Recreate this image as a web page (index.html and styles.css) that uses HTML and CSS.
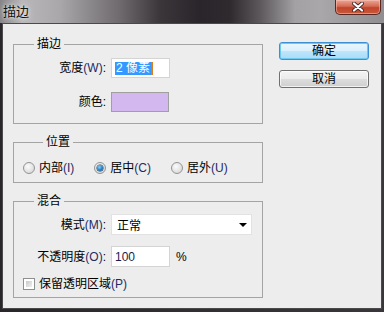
FILE: index.html
```html
<!DOCTYPE html>
<html>
<head>
<meta charset="utf-8">
<link rel="stylesheet" href="styles.css">
</head>
<body>
<div class="titlebar">
  <span class="title">描边</span>
  <div class="close">
    <svg width="14" height="10" viewBox="0 0 14 10">
      <path d="M3 1.5 L11 8.5 M11 1.5 L3 8.5" stroke="#4a2a2a" stroke-width="4" stroke-linecap="round"/>
      <path d="M3 1.5 L11 8.5 M11 1.5 L3 8.5" stroke="#ffffff" stroke-width="2.2" stroke-linecap="round"/>
    </svg>
  </div>
</div>
<div class="main">
  <div class="client">
    <div class="left">
      <fieldset class="group g1">
        <legend>描边</legend>
        <div class="form">
          <span class="lbl">宽度<span class="mn">(W)</span>:</span>
          <div class="input w-input"><span class="sel">2 像素</span><span class="caret"></span></div>
          <span class="lbl">颜色:</span>
          <div class="swatch"></div>
        </div>
      </fieldset>
      <fieldset class="group g2">
        <legend>位置</legend>
        <div class="radios">
          <label class="opt"><span class="radio"></span><span>内部<span class="mn">(I)</span></span></label>
          <label class="opt"><span class="radio on"></span><span>居中<span class="mn">(C)</span></span></label>
          <label class="opt"><span class="radio"></span><span>居外<span class="mn">(U)</span></span></label>
        </div>
      </fieldset>
      <fieldset class="group g3">
        <legend>混合</legend>
        <div class="form f3">
          <span class="lbl">模式<span class="mn">(M)</span>:</span>
          <div class="select"><span>正常</span><span class="arrow"></span></div>
          <span class="lbl">不透明度<span class="mn">(O)</span>:</span>
          <div class="opac"><div class="input o-input">100</div><span class="pct">%</span></div>
        </div>
        <label class="check"><span class="box"></span><span>保留透明区域<span class="mn">(P)</span></span></label>
      </fieldset>
    </div>
    <div class="right">
      <div class="btn default">确定</div>
      <div class="btn">取消</div>
    </div>
  </div>
</div>
</body>
</html>
```
FILE: styles.css
```css
html, body {
  margin: 0;
  padding: 0;
}
body {
  width: 384px;
  height: 312px;
  overflow: hidden;
  font-family: "Liberation Sans", "Noto Sans CJK SC", sans-serif;
  font-size: 12px;
  color: #000;
  display: flex;
  flex-direction: column;
  background: #2f2c31;
}
.titlebar {
  height: 23px;
  display: flex;
  justify-content: space-between;
  align-items: flex-start;
  background: linear-gradient(90deg, #858385 0, #b9b7b9 22px, #a9a7a9 60px, #6e6a6e 120px, #3a363a 160px, #29252a 200px, #2e2a2e 230px, #5c585c 260px, #a3a1a3 295px, #a9a7a9 320px, #908e90 384px);
}
.title {
  padding: 4px 0 0 3px;
  line-height: 16px;
  font-size: 13px;
  color: #111;
  text-shadow: 0 0 6px #e8e8e8, 0 0 3px #f0f0f0;
}
.close {
  width: 44px;
  height: 14px;
  margin-right: 3px;
  border: 1px solid #5a2622;
  border-top: none;
  border-radius: 0 0 5px 5px;
  background: linear-gradient(#e9a898 0, #d66a52 45%, #c0442a 55%, #c85a3c 100%);
  box-shadow: inset 0 0 0 1px rgba(255, 200, 190, 0.5);
  display: flex;
  justify-content: center;
  align-items: center;
}
.main {
  flex: 1;
  display: flex;
  padding: 0 2px 3px 2px;
  background: linear-gradient(90deg, #2a262c 0, #3a363c 100%);
}
.client {
  flex: 1;
  border: 1px solid #4a4a4a;
  background: #ededed;
  display: flex;
  gap: 16px;
  padding: 12px 0 0 10px;
}
.left {
  width: 250px;
  display: flex;
  flex-direction: column;
  gap: 10px;
}
.group {
  margin: 0;
  padding: 0;
  border: 1px solid #a4a4a4;
  min-width: 0;
}
.group legend {
  margin-left: 20px;
  padding: 0 3px;
  line-height: 16px;
  font-size: 12px;
}
.g1 {
  padding: 6px 0 11px 0;
}
.form {
  display: grid;
  grid-template-columns: 92px auto;
  column-gap: 5px;
  row-gap: 14px;
  align-items: center;
}
.lbl {
  text-align: right;
  line-height: 16px;
  white-space: nowrap;
}
.mn {
  color: #1d2a66;
}
.input {
  background: #fff;
  border: 1px solid #d4d4d4;
  box-sizing: border-box;
  height: 20px;
  display: flex;
  align-items: center;
  padding: 0 3px;
}
.w-input {
  width: 59px;
}
.sel {
  background: #3399ff;
  color: #fff;
  line-height: 13px;
  padding: 0 1px;
  white-space: nowrap;
}
.caret {
  width: 2px;
  height: 13px;
  background: #e07a1c;
}
.swatch {
  width: 58px;
  height: 20px;
  box-sizing: border-box;
  border: 1px solid #a0a0a0;
  background: #d3b7ef;
}
.g2 {
  padding: 10px 0 6px 9px;
}
.radios {
  display: flex;
  gap: 20px;
}
.opt {
  display: flex;
  align-items: center;
  gap: 4px;
  line-height: 16px;
  white-space: nowrap;
}
.radio {
  width: 12px;
  height: 12px;
  box-sizing: border-box;
  border-radius: 50%;
  border: 1px solid #949494;
  background: radial-gradient(circle at 40% 35%, #fbfbfb 0, #e4e4e4 55%, #cfcfcf 100%);
  display: flex;
  align-items: center;
  justify-content: center;
}
.radio.on::after {
  content: "";
  width: 6px;
  height: 6px;
  border-radius: 50%;
  background: radial-gradient(circle at 40% 35%, #8ad2f8 0, #2a86c8 50%, #0e4a82 100%);
  box-shadow: 0 0 0 0.5px #1a3a5a;
}
.g3 {
  padding: 5px 0 5px 0;
}
.f3 {
  row-gap: 11px;
}
.select {
  width: 141px;
  height: 21px;
  box-sizing: border-box;
  background: #fff;
  border: 1px solid #e2e2e2;
  display: flex;
  align-items: center;
  justify-content: space-between;
  padding: 0 4px 0 5px;
}
.arrow {
  width: 0;
  height: 0;
  border-left: 4px solid transparent;
  border-right: 4px solid transparent;
  border-top: 4px solid #000;
}
.opac {
  display: flex;
  align-items: center;
  gap: 6px;
}
.o-input {
  width: 59px;
  height: 21px;
  color: #1c1c4a;
}
.pct {
  line-height: 16px;
}
.check {
  display: flex;
  align-items: center;
  gap: 4px;
  margin: 9px 0 0 9px;
  line-height: 16px;
  white-space: nowrap;
}
.box {
  width: 12px;
  height: 12px;
  box-sizing: border-box;
  border: 1px solid #8e8f8f;
  background: #fff;
  padding: 2px;
  display: flex;
}
.box::after {
  content: "";
  flex: 1;
  background: linear-gradient(135deg, #c8c8c8, #f0f0f0);
}
.right {
  display: flex;
  flex-direction: column;
  gap: 10px;
  margin-top: 6px;
}
.btn {
  width: 90px;
  height: 18px;
  box-sizing: border-box;
  border: 1px solid #707070;
  border-radius: 3px;
  background: linear-gradient(#f4f4f4 0, #ebebeb 50%, #dddddd 50%, #cfcfcf 100%);
  box-shadow: inset 0 0 0 1px rgba(255, 255, 255, 0.7);
  display: flex;
  align-items: center;
  justify-content: center;
  line-height: 16px;
}
.btn.default {
  height: 18px;
  border-color: #3c8fd0;
  background: linear-gradient(#eaf6fd 0, #d9f0fc 50%, #bee6fd 50%, #a9dbf6 100%);
  box-shadow: inset 0 0 0 1px #6ec8f0;
}
```
